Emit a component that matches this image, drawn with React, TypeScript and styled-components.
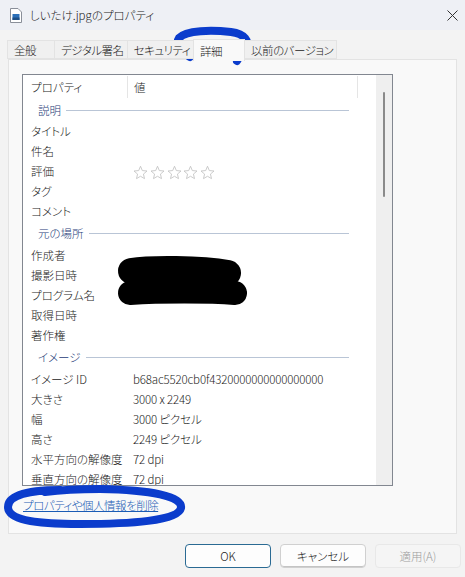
import React from 'react';
import styled, { createGlobalStyle } from 'styled-components';

const GlobalStyle = createGlobalStyle`
  *, *::before, *::after {
    box-sizing: border-box;
  }
  html, body {
    margin: 0;
    padding: 0;
    background: #f3f3f3;
  }
  body {
    font-family: 'Noto Sans CJK JP', 'Noto Sans', sans-serif;
    font-size: 11.5px;
    font-weight: 300;
    color: #1a1a1a;
    font-feature-settings: 'palt';
  }
`;

type Row =
  | { kind: 'group'; label: string }
  | { kind: 'prop'; name: string; value?: string; stars?: boolean };

const rows: Row[] = [
  { kind: 'group', label: '説明' },
  { kind: 'prop', name: 'タイトル' },
  { kind: 'prop', name: '件名' },
  { kind: 'prop', name: '評価', stars: true },
  { kind: 'prop', name: 'タグ' },
  { kind: 'prop', name: 'コメント' },
  { kind: 'group', label: '元の場所' },
  { kind: 'prop', name: '作成者' },
  { kind: 'prop', name: '撮影日時' },
  { kind: 'prop', name: 'プログラム名' },
  { kind: 'prop', name: '取得日時' },
  { kind: 'prop', name: '著作権' },
  { kind: 'group', label: 'イメージ' },
  { kind: 'prop', name: 'イメージ ID', value: 'b68ac5520cb0f4320000000000000000' },
  { kind: 'prop', name: '大きさ', value: '3000 x 2249' },
  { kind: 'prop', name: '幅', value: '3000 ピクセル' },
  { kind: 'prop', name: '高さ', value: '2249 ピクセル' },
  { kind: 'prop', name: '水平方向の解像度', value: '72 dpi' },
  { kind: 'prop', name: '垂直方向の解像度', value: '72 dpi' },
  { kind: 'prop', name: 'ビットの深さ', value: '24' },
];

// tab label + minimum width in px
const tabs: [string, number][] = [
  ['全般', 48],
  ['デジタル署名', 73],
  ['セキュリティ', 64],
  ['詳細', 52],
  ['以前のバージョン', 85],
];

const StarIcon = () => (
  <svg width="15" height="15" viewBox="0 0 24 24">
    <polygon
      points="12,2 14.9,8.9 22.4,9.6 16.7,14.5 18.4,21.8 12,18 5.6,21.8 7.3,14.5 1.6,9.6 9.1,8.9"
      fill="none"
      stroke="#c4c4c4"
      strokeWidth="1.4"
      strokeLinejoin="round"
    />
  </svg>
);

const FileIcon = () => (
  <svg width="12" height="15" viewBox="0 0 12 15">
    <path d="M0.5 0.5 H8 L11.5 4 V14.5 H0.5 Z" fill="#fff" stroke="#8a8f99" />
    <rect x="2.5" y="6" width="7" height="6" fill="#2b6fb8" />
    <rect x="2.5" y="9.5" width="7" height="2.5" fill="#1e4f86" />
  </svg>
);

const App = () => {
  return (
    <>
      <GlobalStyle />
      <Window>
        <TitleBar>
          <FileIcon />
          <Title>しいたけ.jpgのプロパティ</Title>
          <CloseButton>
            <svg width="11" height="11" viewBox="0 0 11 11">
              <path d="M0.5 0.5 L10.5 10.5 M10.5 0.5 L0.5 10.5" stroke="#333" strokeWidth="1" />
            </svg>
          </CloseButton>
        </TitleBar>

        <TabStrip>
          {tabs.map(([t, w]) => (
            <Tab key={t} minWidth={w} active={t === '詳細'}>
              {t}
            </Tab>
          ))}
        </TabStrip>

        <Panel>
          <ListBox>
            <ListContent>
              <HeaderRow>
                <HeaderCell width={105} pad={8}>プロパティ</HeaderCell>
                <HeaderCell width={230} pad={6}>値</HeaderCell>
              </HeaderRow>
              {rows.map((r, i) =>
                r.kind === 'group' ? (
                  <GroupRow key={i} first={i === 0}>
                    <span>{r.label}</span>
                    <GroupLine />
                  </GroupRow>
                ) : (
                  <PropRow key={i}>
                    <NameCell>{r.name}</NameCell>
                    <ValueCell>
                      {r.stars ? (
                        <Stars>
                          {[0, 1, 2, 3, 4].map(s => (
                            <StarIcon key={s} />
                          ))}
                        </Stars>
                      ) : (
                        r.value
                      )}
                    </ValueCell>
                  </PropRow>
                ),
              )}
            </ListContent>
            <ScrollBar>
              <Thumb />
            </ScrollBar>
          </ListBox>
          <RemoveLink href="#">プロパティや個人情報を削除</RemoveLink>
        </Panel>

        <ButtonBar>
          <DialogButton variant="default">OK</DialogButton>
          <DialogButton variant="normal">キャンセル</DialogButton>
          <DialogButton variant="disabled">適用(A)</DialogButton>
        </ButtonBar>

        {/* marker scribbles drawn over the screenshot */}
        <Markup width="465" height="577" viewBox="0 0 465 577">
          <g fill="none" stroke="#0b3ccc" strokeWidth="8" strokeLinecap="round" strokeLinejoin="round">
            <path d="M190 57 C180 51 175 44 179 38 C186 30 212 30 231 32 C245 34 250 41 246 49 C243 54 239 57 237 61" />
            <path d="M60 490 C30 490 8 495 8 507 C8 519 32 524 80 524 C130 524 178 521 181 508 C183 496 150 490 100 489 C80 489 60 490 45 492" />
          </g>
          <g fill="none" stroke="#000" strokeLinecap="round" strokeLinejoin="round">
            <path d="M131 271 C150 268 200 268 228 273" strokeWidth="26" />
            <path d="M130 293 C160 291 210 291 235 293" strokeWidth="24" />
          </g>
        </Markup>
      </Window>
    </>
  );
};

export default App;

const Window = styled.div`
  position: relative;
  width: 465px;
  height: 577px;
  display: flex;
  flex-direction: column;
  background: #f3f3f3;
  overflow: hidden;
`;

const TitleBar = styled.div`
  height: 30px;
  display: flex;
  align-items: center;
  padding: 0 0 0 10px;
  background: #eef0f5;
  gap: 8px;
`;

const Title = styled.span`
  flex: 1;
  color: #1a1a1a;
`;

const CloseButton = styled.div`
  width: 26px;
  height: 30px;
  display: flex;
  align-items: center;
  justify-content: center;
`;

const TabStrip = styled.div`
  display: flex;
  align-items: flex-end;
  padding: 0 0 0 8px;
  margin-top: 9px;
  height: 20px;
  position: relative;
  z-index: 1;
`;

const Tab = styled.div<{ active?: boolean; minWidth: number }>`
  min-width: ${({ minWidth }) => minWidth}px;
  height: ${({ active }) => (active ? '22px' : '19px')};
  padding: 0 3px 0 6px;
  margin-bottom: ${({ active }) => (active ? '-2px' : '0')};
  display: flex;
  align-items: center;
  border: 1px solid #e3e3e3;
  border-bottom: ${({ active }) => (active ? 'none' : '1px solid #e3e3e3')};
  margin-left: -1px;
  background: ${({ active }) => (active ? '#f9f9f9' : '#f0f0f0')};
  color: #1a1a1a;
  white-space: nowrap;
  letter-spacing: -0.5px;
`;

const Panel = styled.div`
  margin: 0 8px;
  height: 475px;
  border: 1px solid #e3e3e3;
  background: #f9f9f9;
  padding: 14px 13px 0;
  display: flex;
  flex-direction: column;
  align-items: flex-start;
`;

const ListBox = styled.div`
  width: 371px;
  height: 412px;
  border: 1px solid #828790;
  background: #fff;
  display: flex;
  overflow: hidden;
`;

const ListContent = styled.div`
  flex: 1;
  overflow: hidden;
`;

const HeaderRow = styled.div`
  height: 24px;
  display: flex;
  padding-top: 1px;
`;

const HeaderCell = styled.div<{ width: number; pad: number }>`
  width: ${({ width }) => width}px;
  height: 22px;
  display: flex;
  align-items: center;
  padding-left: ${({ pad }) => pad}px;
  border-right: 1px solid #e5e5e5;
`;

const GroupRow = styled.div<{ first?: boolean }>`
  height: ${({ first }) => (first ? '22px' : '24px')};
  display: flex;
  align-items: center;
  padding-left: 15px;
  padding-right: 27px;
  gap: 5px;
  color: #1e3c78;
`;

const GroupLine = styled.div`
  flex: 1;
  height: 1px;
  background: #b9c5d6;
`;

const PropRow = styled.div`
  height: 20px;
  display: flex;
  align-items: center;
`;

const NameCell = styled.div`
  width: 104px;
  flex-shrink: 0;
  padding-left: 8px;
  white-space: nowrap;
  overflow: hidden;
`;

const ValueCell = styled.div`
  flex: 1;
  padding-left: 6px;
  white-space: nowrap;
  letter-spacing: -0.15px;
`;

const Stars = styled.div`
  display: flex;
  gap: 1.8px;
  padding-top: 2px;
`;

const ScrollBar = styled.div`
  width: 16px;
  background: #efefef;
  display: flex;
  justify-content: center;
  padding-top: 17px;
`;

const Thumb = styled.div`
  width: 2px;
  height: 105px;
  border-radius: 1px;
  background: #8a8a8a;
`;

const RemoveLink = styled.a`
  margin-top: 11px;
  margin-left: 1px;
  color: #1b5cb5;
  text-decoration: underline;
  letter-spacing: -0.5px;
`;

const ButtonBar = styled.div`
  display: flex;
  justify-content: flex-end;
  gap: 9px;
  padding: 10px 4px 0 0;
`;

const DialogButton = styled.button<{ variant: 'default' | 'normal' | 'disabled' }>`
  width: 86px;
  height: 24px;
  border-radius: 4px;
  font-family: 'Noto Sans CJK JP', 'Noto Sans', sans-serif;
  font-size: 11.5px;
  font-weight: 300;
  font-feature-settings: 'palt';
  background: ${({ variant }) => (variant === 'disabled' ? '#f5f5f5' : '#fdfdfd')};
  color: ${({ variant }) => (variant === 'disabled' ? '#9d9d9d' : '#1a1a1a')};
  border: 1px solid
    ${({ variant }) => (variant === 'default' ? '#2a6a93' : variant === 'disabled' ? '#e8e8e8' : '#d0d0d0')};
  box-shadow: ${({ variant }) => (variant === 'normal' ? 'inset 0 -1px 0 #c4c4c4' : 'none')};
  padding: 0;
`;

const Markup = styled.svg`
  position: absolute;
  left: 0;
  top: 0;
  pointer-events: none;
`;
